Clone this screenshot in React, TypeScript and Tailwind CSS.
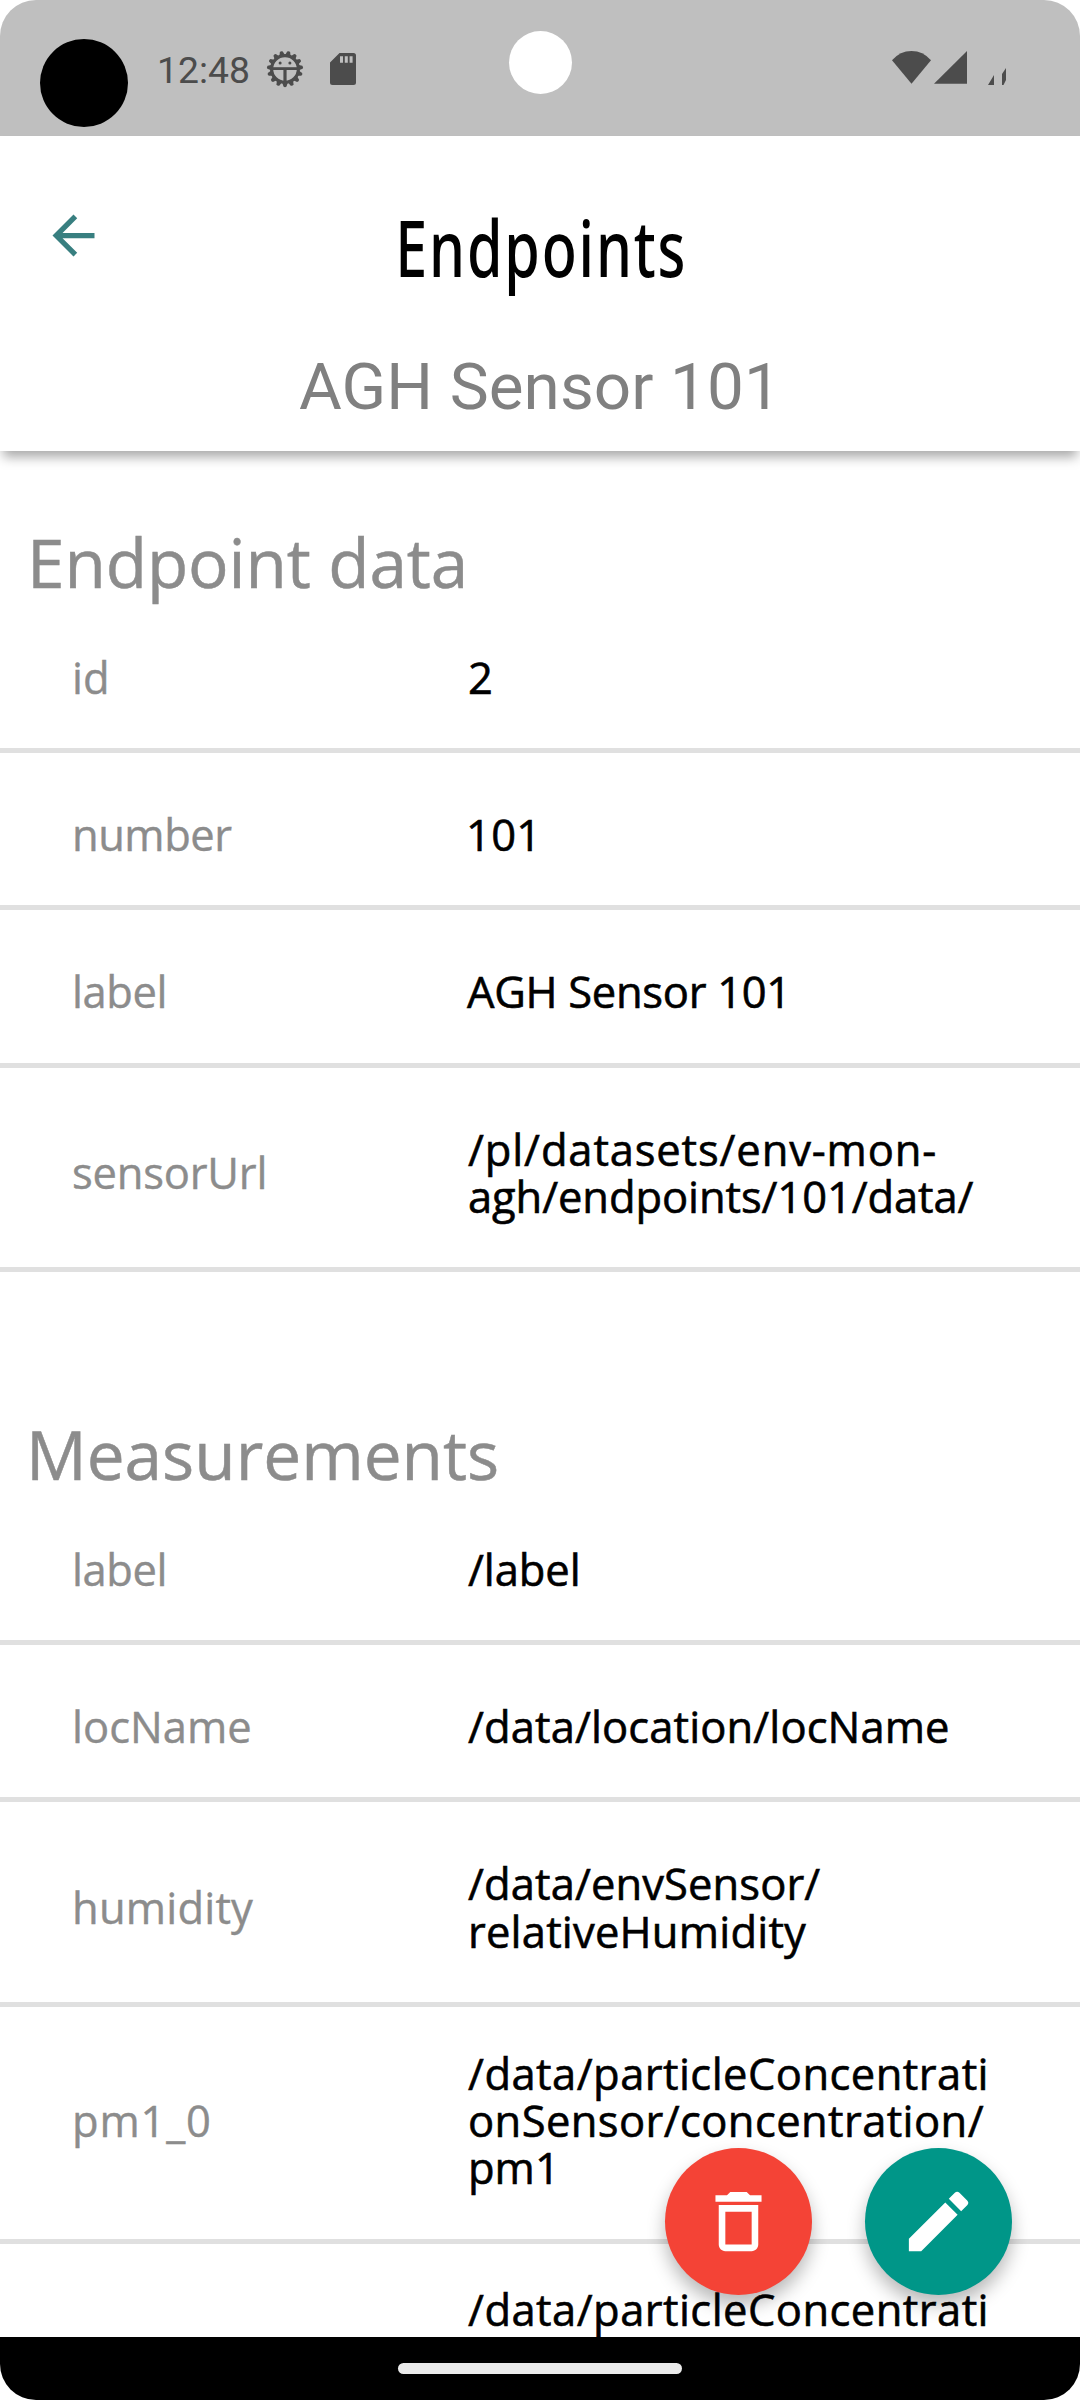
import React from 'react';

type Row = { label: string; labelClass: string; lines: { text: string; className: string }[]; compact?: boolean };

const endpointRows: Row[] = [
  { label: 'id', labelClass: '', lines: [{ text: '2', className: '' }] },
  { label: 'number', labelClass: 'tracking-[-0.5px]', lines: [{ text: '101', className: '-ml-[2px] tracking-[0.3px]' }] },
  { label: 'label', labelClass: 'tracking-[-0.4px]', lines: [{ text: 'AGH Sensor 101', className: '-ml-px tracking-[-0.3px]' }] },
  {
    label: 'sensorUrl',
    labelClass: 'tracking-[-0.2px]',
    lines: [
      { text: '/pl/datasets/env-mon-', className: 'tracking-[0.85px]' },
      { text: 'agh/endpoints/101/data/', className: 'tracking-[-0.1px]' },
    ],
  },
];

const measurementRows: Row[] = [
  { label: 'label', labelClass: 'tracking-[-0.4px]', lines: [{ text: '/label', className: 'tracking-[-0.1px]' }] },
  { label: 'locName', labelClass: '', lines: [{ text: '/data/location/locName', className: 'tracking-[0.1px]' }] },
  {
    label: 'humidity',
    labelClass: 'tracking-[0.2px]',
    lines: [
      { text: '/data/envSensor/', className: 'tracking-[0.1px]' },
      { text: 'relativeHumidity', className: 'tracking-[0.2px]' },
    ],
  },
  {
    label: 'pm1_0',
    labelClass: 'tracking-[0.8px]',
    compact: true,
    lines: [
      { text: '/data/particleConcentrati', className: 'tracking-[0.45px]' },
      { text: 'onSensor/concentration/', className: 'tracking-[0.4px]' },
      { text: 'pm1', className: '' },
    ],
  },
  {
    label: '',
    labelClass: '',
    compact: true,
    lines: [{ text: '/data/particleConcentrati', className: 'tracking-[0.45px]' }],
  },
];

function DataRow({ row }: { row: Row }) {
  return (
    <div
      className={
        'flex shrink-0 items-center border-b-[5px] border-[#e0e0e0] pb-[47.2px] pl-[72px] text-[43.5px] leading-[47.2px] ' +
        (row.compact ? 'pt-[42.7px]' : 'pt-[58px]')
      }
    >
      <div className={'w-[396px] shrink-0 text-[#8c8c8c] [-webkit-text-stroke:0.4px_#8c8c8c] ' + row.labelClass}>{row.label}</div>
      <div className="text-black [-webkit-text-stroke:0.6px_black]">
        {row.lines.map((l, i) => (
          <div key={i} className={'whitespace-nowrap ' + l.className}>
            {l.text}
          </div>
        ))}
      </div>
    </div>
  );
}

function DebugIcon() {
  const teeth = Array.from({ length: 15 }, (_, i) => (i * 360) / 15 + 12);
  return (
    <svg className="ml-[16px] h-[38px] w-[38px]" viewBox="-19 -19 38 38" fill="#4c4c4c">
      {teeth.map((a) => (
        <path key={a} d="M-3 -13 L-1.5 -17.6 Q0 -18.8 1.5 -17.6 L3 -13 Z" transform={`rotate(${a})`} />
      ))}
      <circle r="13.4" fill="none" stroke="#4c4c4c" strokeWidth="3.2" />
      <rect x="-13" y="-1.8" width="26" height="2.8" />
      <rect x="-1.6" y="0" width="3.2" height="13" />
      <circle cx="-4.9" cy="-6" r="1.5" />
      <circle cx="4.9" cy="-6" r="1.5" />
    </svg>
  );
}

export default function App() {
  return (
    <div className="h-[2400px] w-[1080px] overflow-hidden bg-white font-['Roboto',sans-serif]">
      <div className="relative flex h-[2400px] flex-col overflow-hidden rounded-[36px] bg-white">
        <div className="relative flex h-[136px] shrink-0 items-start bg-[#bfbfbf] text-[#4c4c4c]">
          <div className="mt-[39px] ml-[40px] h-[88px] w-[88px] rounded-full bg-black" />
          <div className="mt-[49px] flex items-center">
            <span className="mt-[2px] ml-[29px] text-[37.3px] leading-[38px]">12:48</span>
            <DebugIcon />
            <svg className="ml-[26px] h-[32px] w-[26px]" viewBox="0 0 26 32">
              <path fill="#4c4c4c" d="M9.5 0H23.5a2.5 2.5 0 0 1 2.5 2.5V29.5a2.5 2.5 0 0 1-2.5 2.5H2.5A2.5 2.5 0 0 1 0 29.5V9.5z" />
              <path fill="#bfbfbf" d="M10 3.2h3v6.5h-3zM14.8 3.2h3v6.5h-3zM19.6 3.2h3v6.5h-3z" />
            </svg>
          </div>
          <div className="absolute top-[31px] left-[509px] h-[63px] w-[63px] rounded-full bg-white" />
          <svg className="mt-[50px] mr-[72px] ml-auto h-[36px] w-[116px]" viewBox="892 50 116 36" fill="#4c4c4c">
            <path d="M892 60.3Q900 51 911.5 51T931 60.3L911.5 83.7z" />
            <path d="M967 51V83.8H934z" />
            <path d="M988 85L994 75V85zM1002 85V74L1006 68V80L1003.5 85z" />
          </svg>
        </div>

        <header className="relative z-10 flex h-[315px] shrink-0 flex-col items-center bg-white shadow-[0_9px_11px_-3px_rgba(0,0,0,0.34)]">
          <svg className="absolute top-[68px] left-[42px] h-[63px] w-[63px]" viewBox="0 0 24 24" fill="#387f80">
            <path d="M20 11H7.83l5.59-5.59L12 4l-8 8 8 8 1.41-1.41L7.83 13H20v-2z" />
          </svg>
          <h1 className="mt-[61px] ml-[3px] scale-x-[0.74] font-['Noto_Sans',sans-serif] text-[77.5px] leading-[100px] font-medium tracking-[2.5px] text-black">Endpoints</h1>
          <h2 className="mt-[50px] text-[65.6px] leading-[80px] tracking-[0.1px] text-[#808080]">AGH Sensor 101</h2>
        </header>

        <main className="flex min-h-0 flex-1 flex-col overflow-hidden font-['Open_Sans',sans-serif]">
          <h3 className="shrink-0 pt-[81px] pb-[3.6px] pl-[27px] text-[67.5px] leading-[60px] tracking-[-0.1px] text-[#8c8c8c] [-webkit-text-stroke:0.5px_#8c8c8c]">Endpoint data</h3>
          <section className="shrink-0">
            {endpointRows.map((r, i) => (
              <DataRow key={i} row={r} />
            ))}
          </section>
          <h3 className="shrink-0 pt-[152px] pb-[3.3px] pl-[26px] text-[67.5px] leading-[60px] text-[#8c8c8c] [-webkit-text-stroke:0.5px_#8c8c8c]">Measurements</h3>
          <section className="shrink-0">
            {measurementRows.map((r, i) => (
              <DataRow key={i} row={r} />
            ))}
          </section>
        </main>

        <nav className="flex h-[63px] shrink-0 justify-center bg-black pt-[26px]">
          <div className="h-[11px] w-[284px] rounded-full bg-[#ebebeb]" />
        </nav>

        <div className="absolute top-[2148px] left-[665px] flex gap-[52.5px]">
          <button className="flex h-[147px] w-[147px] items-center justify-center rounded-full bg-[#f44336] shadow-[0_10px_18px_rgba(0,0,0,0.28)]">
            <svg className="h-[79px] w-[79px]" viewBox="0 0 24 24" fill="#fff">
              <path d="M16 9v10H8V9h8m-1.5-6h-5l-1 1H5v2h14V4h-3.5l-1-1zM18 7H6v12c0 1.1.9 2 2 2h8c1.1 0 2-.9 2-2V7z" />
            </svg>
          </button>
          <button className="flex h-[147px] w-[147px] items-center justify-center rounded-full bg-[#009688] shadow-[0_10px_18px_rgba(0,0,0,0.28)]">
            <svg className="h-[79px] w-[79px]" viewBox="0 0 24 24" fill="#fff">
              <path d="M3 17.25V21h3.75L17.81 9.94l-3.75-3.75L3 17.25zM20.71 7.04a1 1 0 0 0 0-1.41l-2.34-2.34a1 1 0 0 0-1.41 0l-1.83 1.83 3.75 3.75 1.83-1.83z" />
            </svg>
          </button>
        </div>
      </div>
    </div>
  );
}
